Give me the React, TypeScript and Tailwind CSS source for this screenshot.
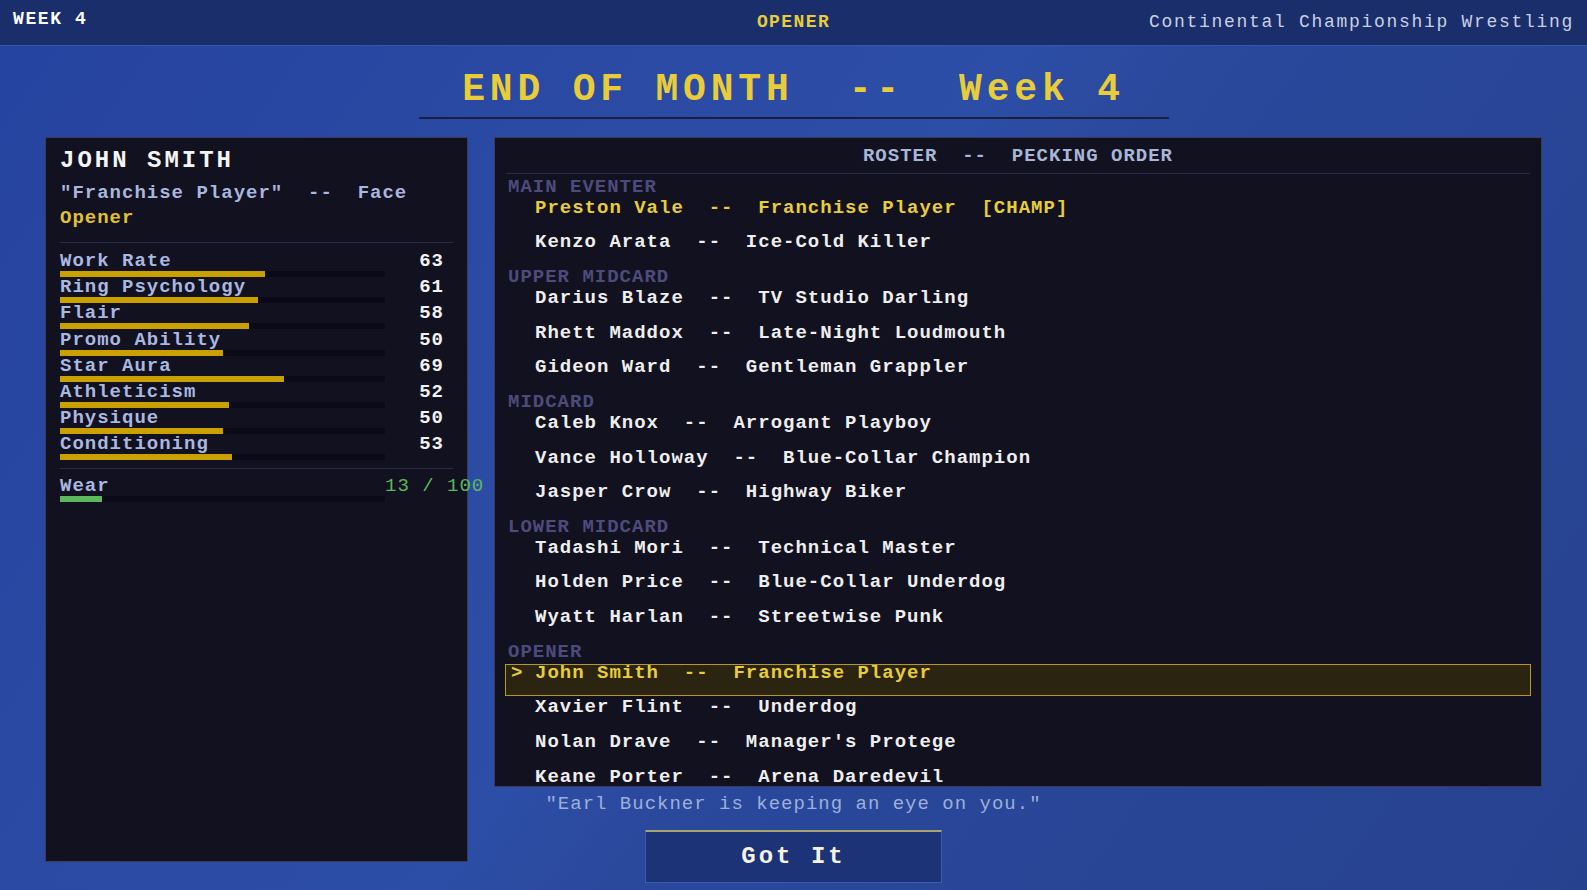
import React from "react";

type Row = { name: string; gimmick: string; champ?: boolean; selected?: boolean };
type Tier = { tier: string; rows: Row[] };

const ROSTER: Tier[] = [
  {
    tier: "MAIN EVENTER",
    rows: [
      { name: "Preston Vale", gimmick: "Franchise Player", champ: true },
      { name: "Kenzo Arata", gimmick: "Ice-Cold Killer" },
    ],
  },
  {
    tier: "UPPER MIDCARD",
    rows: [
      { name: "Darius Blaze", gimmick: "TV Studio Darling" },
      { name: "Rhett Maddox", gimmick: "Late-Night Loudmouth" },
      { name: "Gideon Ward", gimmick: "Gentleman Grappler" },
    ],
  },
  {
    tier: "MIDCARD",
    rows: [
      { name: "Caleb Knox", gimmick: "Arrogant Playboy" },
      { name: "Vance Holloway", gimmick: "Blue-Collar Champion" },
      { name: "Jasper Crow", gimmick: "Highway Biker" },
    ],
  },
  {
    tier: "LOWER MIDCARD",
    rows: [
      { name: "Tadashi Mori", gimmick: "Technical Master" },
      { name: "Holden Price", gimmick: "Blue-Collar Underdog" },
      { name: "Wyatt Harlan", gimmick: "Streetwise Punk" },
    ],
  },
  {
    tier: "OPENER",
    rows: [
      { name: "John Smith", gimmick: "Franchise Player", selected: true },
      { name: "Xavier Flint", gimmick: "Underdog" },
      { name: "Nolan Drave", gimmick: "Manager's Protege" },
      { name: "Keane Porter", gimmick: "Arena Daredevil" },
    ],
  },
];

const STATS: [string, number][] = [
  ["Work Rate", 63],
  ["Ring Psychology", 61],
  ["Flair", 58],
  ["Promo Ability", 50],
  ["Star Aura", 69],
  ["Athleticism", 52],
  ["Physique", 50],
  ["Conditioning", 53],
];

function StatRow({ label, value }: { label: string; value: number }) {
  return (
    <div className="flex items-start">
      <div className="w-[325px] flex flex-col">
        <div className="h-[16px] leading-[16px] text-[#aab7e0] whitespace-pre">{label}</div>
        <div className="mt-[2px] h-[6px] bg-[#0b0a17]">
          <div className="h-full bg-[#c9a000]" style={{ width: `${value}%` }} />
        </div>
      </div>
      <div className="w-[59px] h-[16px] leading-[16px] text-right text-[#f2f2f2] whitespace-pre">
        {value}
      </div>
    </div>
  );
}

export default function App() {
  return (
    <div className="relative h-[890px] w-full overflow-hidden font-['Liberation_Mono',monospace] font-bold text-[19px] tracking-[1px] bg-[#2a499e] bg-[linear-gradient(125deg,#2543a0_0%,#2b4aa3_30%,#2d4ea6_48%,#2a489c_56%,#26428f_100%)]">
      {/* Top bar */}
      <div className="h-[46px] bg-[#1a2e6c] border-b border-[#3557a8] grid grid-cols-3 px-[13px]">
        <div className="pt-[10px] leading-[18px] text-[18px] text-white tracking-[1.6px]">WEEK 4</div>
        <div className="pt-[13px] leading-[18px] text-[18px] text-center text-[#e8cc3a] tracking-[1.4px]">
          OPENER
        </div>
        <div className="pt-[13px] leading-[18px] text-[18px] text-right font-normal text-[#c9d0e2] tracking-[1.7px]">
          Continental Championship Wrestling
        </div>
      </div>

      {/* Title */}
      <div className="flex justify-center pt-[22px]">
        <div className="w-[750px] border-b-2 border-[#1a2140] pb-[5px] text-center">
          <div className="leading-[44px] text-[38px] text-[#e8cc3a] tracking-[4.8px] whitespace-pre">
            {"END OF MONTH  --  Week 4"}
          </div>
        </div>
      </div>

      {/* Main grid */}
      <div className="mt-[18px] grid justify-center grid-cols-[423px_1048px] grid-rows-[650px_auto] gap-x-[26px]">
        {/* Left panel */}
        <div className="col-start-1 row-start-1 row-span-2 self-start h-[725px] bg-[#12111f] border border-[#3b3a5a] px-[14px] pt-[11px] flex flex-col">
          <div className="leading-[24px] text-[24px] text-[#f4f4f4] tracking-[3px]">JOHN SMITH</div>
          <div className="mt-[8px] leading-[25px] text-[#a9b6de] whitespace-pre">
            {'"Franchise Player"  --  Face'}
          </div>
          <div className="leading-[25px] text-[#e0c232]">Opener</div>
          <div className="mt-[11px] h-px bg-[#2a2a46]" />
          <div className="mt-[10px] flex flex-col gap-[2.2px]">
            {STATS.map(([l, v]) => (
              <StatRow key={l} label={l} value={v} />
            ))}
          </div>
          <div className="mt-[8px] h-px bg-[#2a2a46]" />
          <div className="mt-[9px] flex items-start">
            <div className="w-[325px] flex flex-col">
              <div className="h-[16px] leading-[16px] text-[#aab7e0]">Wear</div>
              <div className="mt-[2px] h-[6px] bg-[#0b0a17]">
                <div className="h-full bg-[#5cb85c]" style={{ width: "13%" }} />
              </div>
            </div>
            <div className="w-[59px] h-[16px] leading-[16px] text-right text-[#5cb85c] font-normal whitespace-pre">
              13 / 100
            </div>
          </div>
        </div>

        {/* Right panel */}
        <div className="col-start-2 row-start-1 h-[650px] bg-[#12111f] border border-[#3b3a5a] px-[10px] pt-[9px] overflow-hidden">
          <div className="mx-[1px] border-b border-[#2a2a46] pb-[8px] text-center leading-[18px] text-[#a8b6d8] whitespace-pre">
            {"ROSTER  --  PECKING ORDER"}
          </div>
          <div className="mt-[4px] flex flex-col">
            {ROSTER.map((t) => (
              <div key={t.tier} className="flex flex-col">
                <div className="h-[20.8px] leading-[18px] pl-[3px] text-[#4d4b7c]">{t.tier}</div>
                {t.rows.map((r) => (
                  <div
                    key={r.name}
                    className={
                      r.selected
                        ? "h-[32px] mb-[2.7px] border border-[#b39a22] bg-[#2a2410] flex items-start pl-[5px] leading-[16px] text-[#e8cc3a]"
                        : r.champ
                        ? "h-[32px] mb-[2.7px] border border-transparent flex items-start pl-[5px] leading-[16px] text-[#e8cc3a]"
                        : "h-[32px] mb-[2.7px] border border-transparent flex items-start pl-[5px] leading-[16px] text-[#eeeeee]"
                    }
                  >
                    <span className="w-[24px] shrink-0">{r.selected ? ">" : ""}</span>
                    <span className="whitespace-pre">
                      {`${r.name}  --  ${r.gimmick}${r.champ ? "  [CHAMP]" : ""}`}
                    </span>
                  </div>
                ))}
              </div>
            ))}
          </div>
        </div>

        {/* Footer */}
        <div className="col-start-1 col-span-2 row-start-2 flex flex-col items-center">
          <div className="mt-[7px] leading-[20px] font-normal text-[#9db0d8] whitespace-pre">
            {'"Earl Buckner is keeping an eye on you."'}
          </div>
          <div className="mt-[16px] w-[297px] h-[53px] bg-[#1c3377] border border-[#3a5bb0] border-t-2 border-t-[#a9a271] flex items-center justify-center text-[24px] text-[#f6f2e4] tracking-[3px]">
            Got It
          </div>
        </div>
      </div>
    </div>
  );
}
